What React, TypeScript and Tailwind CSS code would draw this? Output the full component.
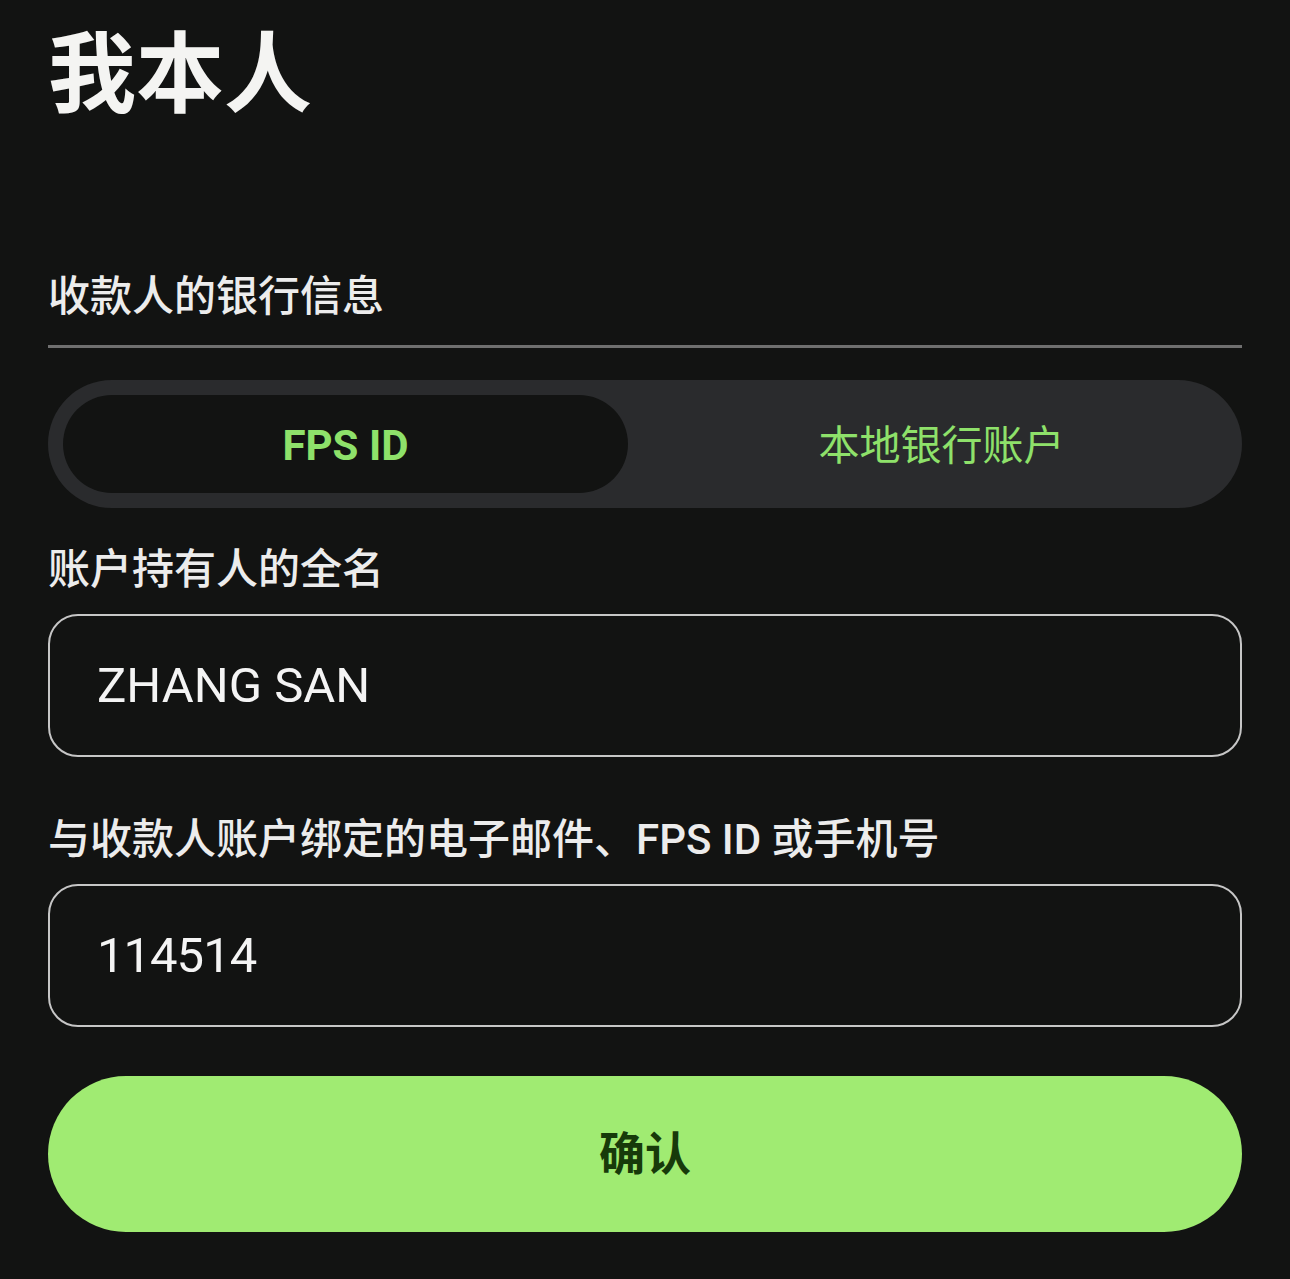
import React from "react";

const font = { fontFamily: 'Roboto, "Noto Sans CJK SC", sans-serif' };

export default function App() {
  return (
    <div
      className="min-h-[1279px] w-[1290px] bg-[#121312] px-[48px] text-[#f2f2f2] font-['Roboto','Noto_Sans_CJK_SC',sans-serif]"
      style={font}
    >
      <h1 className="pt-[25px] text-[88px] font-bold leading-[100px] text-[#f4f4f2]">我本人</h1>

      <div className="mt-[147px] text-[42px] font-medium leading-[50px] text-[#ececec]">收款人的银行信息</div>
      <div className="mt-[23px] h-[3px] bg-[#6f6f6f]" />

      <div className="mt-[32px] flex h-[128px] items-stretch rounded-full bg-[#2a2b2d] p-[15px]">
        <div className="flex w-[565px] items-center justify-center rounded-full bg-[#121312] pt-[2px] text-[42px] font-bold text-[#8ee16a]">
          FPS ID
        </div>
        <div className="ml-[28px] flex flex-1 items-center justify-center pt-[6px] text-[41px] text-[#8ee16a]">
          本地银行账户
        </div>
      </div>

      <div className="mt-[37px] text-[42px] font-medium leading-[50px] text-[#ececec]">账户持有人的全名</div>
      <div className="mt-[19px] flex h-[143px] items-center rounded-[30px] border-[2.5px] border-[#c6c6c6] pl-[47px] text-[49px] text-[#f4f4f4]">
        ZHANG SAN
      </div>

      <div className="mt-[58px] text-[42px] font-medium leading-[50px] text-[#ececec]">
        与收款人账户绑定的电子邮件、FPS ID 或手机号
      </div>
      <div className="mt-[19px] flex h-[143px] items-center rounded-[30px] border-[2.5px] border-[#c6c6c6] pl-[47px] text-[49px] tracking-[-1px] text-[#f4f4f4]">
        114514
      </div>

      <button className="mt-[49px] flex h-[156px] w-full items-center justify-center rounded-full bg-[#a0eb72] text-[46px] font-bold text-[#173a0a]">
        确认
      </button>
    </div>
  );
}
